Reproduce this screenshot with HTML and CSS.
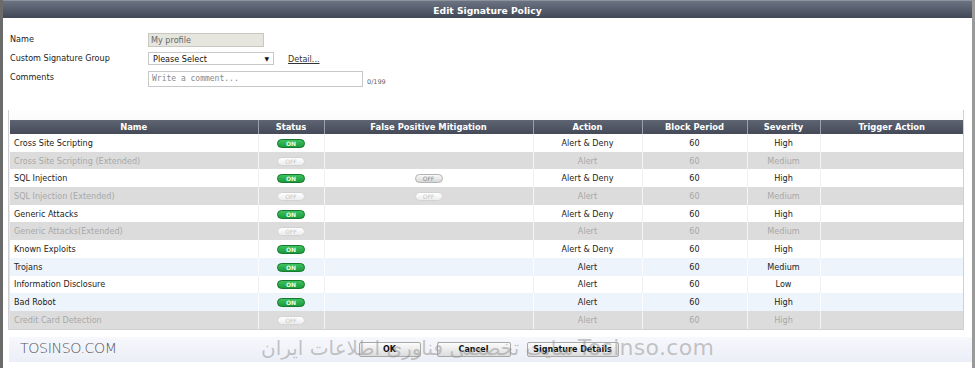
FILE: index.html
```html
<!DOCTYPE html>
<html lang="en">

<head>
    <meta charset="UTF-8">
    <title>Edit Signature Policy</title>
    <link rel="stylesheet" href="styles.css">
</head>

<body>
    <div class="dialog">
        <div class="title-bar">Edit Signature Policy</div>

        <div class="form">
            <div class="form-row">
                <label>Name</label>
                <input type="text" class="name-input" value="My profile" readonly>
            </div>
            <div class="form-row">
                <label>Custom Signature Group</label>
                <div class="select">Please Select <span class="arrow">&#9660;</span></div>
                <a href="#" class="detail-link">Detail...</a>
            </div>
            <div class="form-row">
                <label>Comments</label>
                <div class="comment-box">Write a comment...</div>
                <span class="counter">0/199</span>
            </div>
        </div>

        <div class="table-wrap">
            <table class="sig-table">
                <colgroup>
                    <col style="width: 248px">
                    <col style="width: 66px">
                    <col style="width: 209px">
                    <col style="width: 109px">
                    <col style="width: 105px">
                    <col style="width: 73px">
                    <col style="width: 143px">
                </colgroup>
                <thead>
                    <tr>
                        <th>Name</th>
                        <th>Status</th>
                        <th>False Positive Mitigation</th>
                        <th>Action</th>
                        <th>Block Period</th>
                        <th>Severity</th>
                        <th>Trigger Action</th>
                    </tr>
                </thead>
                <tbody>
                    <tr>
                        <td class="name">Cross Site Scripting</td>
                        <td><span class="toggle on">ON</span></td>
                        <td></td>
                        <td>Alert &amp; Deny</td>
                        <td>60</td>
                        <td>High</td>
                        <td></td>
                    </tr>
                    <tr class="disabled">
                        <td class="name">Cross Site Scripting (Extended)</td>
                        <td><span class="toggle off">OFF</span></td>
                        <td></td>
                        <td>Alert</td>
                        <td>60</td>
                        <td>Medium</td>
                        <td></td>
                    </tr>
                    <tr>
                        <td class="name">SQL Injection</td>
                        <td><span class="toggle on">ON</span></td>
                        <td><span class="toggle off">OFF</span></td>
                        <td>Alert &amp; Deny</td>
                        <td>60</td>
                        <td>High</td>
                        <td></td>
                    </tr>
                    <tr class="disabled">
                        <td class="name">SQL Injection (Extended)</td>
                        <td><span class="toggle off">OFF</span></td>
                        <td><span class="toggle off">OFF</span></td>
                        <td>Alert</td>
                        <td>60</td>
                        <td>Medium</td>
                        <td></td>
                    </tr>
                    <tr>
                        <td class="name">Generic Attacks</td>
                        <td><span class="toggle on">ON</span></td>
                        <td></td>
                        <td>Alert &amp; Deny</td>
                        <td>60</td>
                        <td>High</td>
                        <td></td>
                    </tr>
                    <tr class="disabled">
                        <td class="name">Generic Attacks(Extended)</td>
                        <td><span class="toggle off">OFF</span></td>
                        <td></td>
                        <td>Alert</td>
                        <td>60</td>
                        <td>Medium</td>
                        <td></td>
                    </tr>
                    <tr>
                        <td class="name">Known Exploits</td>
                        <td><span class="toggle on">ON</span></td>
                        <td></td>
                        <td>Alert &amp; Deny</td>
                        <td>60</td>
                        <td>High</td>
                        <td></td>
                    </tr>
                    <tr class="alt">
                        <td class="name">Trojans</td>
                        <td><span class="toggle on">ON</span></td>
                        <td></td>
                        <td>Alert</td>
                        <td>60</td>
                        <td>Medium</td>
                        <td></td>
                    </tr>
                    <tr>
                        <td class="name">Information Disclosure</td>
                        <td><span class="toggle on">ON</span></td>
                        <td></td>
                        <td>Alert</td>
                        <td>60</td>
                        <td>Low</td>
                        <td></td>
                    </tr>
                    <tr class="alt">
                        <td class="name">Bad Robot</td>
                        <td><span class="toggle on">ON</span></td>
                        <td></td>
                        <td>Alert</td>
                        <td>60</td>
                        <td>High</td>
                        <td></td>
                    </tr>
                    <tr class="disabled">
                        <td class="name">Credit Card Detection</td>
                        <td><span class="toggle off">OFF</span></td>
                        <td></td>
                        <td>Alert</td>
                        <td>60</td>
                        <td>High</td>
                        <td></td>
                    </tr>
                </tbody>
            </table>
        </div>

        <div class="footer">
            <button class="btn btn-ok">OK</button>
            <button class="btn btn-cancel">Cancel</button>
            <button class="btn btn-details">Signature Details</button>

            <span class="wm-left">TOSINSO.COM</span>
            <span class="wm-center"><span class="wm-fa" dir="rtl">سایت تخصصی فناوری اطلاعات ایران</span>Tosinso.com</span>
        </div>
    </div>
</body>

</html>
```

FILE: styles.css
```css
body {
    margin: 0;
    padding: 0;
    background-color: #fff;
    font-family: "DejaVu Sans", Verdana, sans-serif;
    font-size: 8.1px;
    color: #222;
}

.dialog {
    width: 969px;
    height: 368px;
    border-left: 3px solid #6b6b6b;
    border-right: 3px solid #9a9a9a;
    background-color: #fff;
}

.title-bar {
    height: 17px;
    line-height: 19px;
    background: linear-gradient(#6b7383, #414856);
    color: #fff;
    font-weight: bold;
    font-size: 9.2px;
    text-align: center;
    border-top: 1px solid #8d939c;
}

/* form */

.form {
    padding: 12px 0 0 7px;
    height: 80px;
}

.form-row {
    display: flex;
    align-items: center;
    height: 19px;
}

.form-row label {
    width: 138px;
    margin-top: -2px;
}

.name-input {
    width: 116px;
    height: 14px;
    box-sizing: border-box;
    margin: 0;
    padding: 0 2px;
    border: 1px solid #c8c8c0;
    background-color: #e6e6df;
    font-family: "DejaVu Sans", Verdana, sans-serif;
    font-size: 8.1px;
    color: #666;
}

.select {
    width: 126px;
    height: 13px;
    box-sizing: border-box;
    padding: 0 4px;
    border: 1px solid #c8c8c8;
    line-height: 12px;
    position: relative;
    color: #111;
}

.select .arrow {
    position: absolute;
    right: 4px;
    top: 0;
    font-size: 6px;
}

.detail-link {
    margin-left: 14px;
    color: #333;
    text-decoration: underline;
}

.comment-box {
    width: 215px;
    height: 16px;
    box-sizing: border-box;
    padding: 0 3px;
    border: 1px solid #c8c8c8;
    line-height: 14px;
    font-family: "DejaVu Sans Mono", "Liberation Mono", monospace;
    font-size: 8px;
    color: #888;
    margin-top: 2px;
}

.counter {
    margin-left: 4px;
    margin-top: 8px;
    font-size: 6.5px;
    color: #666;
}

/* table */

.table-wrap {
    margin: 0 8px 0 5px;
    padding: 10px 1px 0 1px;
    background: linear-gradient(#fdfdfd, #e4e4e8 60%, #dfe0e8);
    border: 1px solid #cfcfd4;
    border-top: none;
}

.sig-table {
    width: 953px;
    border-collapse: collapse;
    table-layout: fixed;
    background-color: #fff;
}

.sig-table th {
    height: 14px;
    padding: 0;
    background: linear-gradient(#5e6472, #444a57);
    color: #fff;
    font-weight: bold;
    font-size: 8.4px;
    text-align: center;
    border-left: 1px solid #9aa0aa;
}

.sig-table th:first-child {
    border-left: none;
}

.sig-table td {
    height: 17.7px;
    padding: 0;
    text-align: center;
    border-left: 1px solid #f0f0f0;
    color: #222;
}

.sig-table td:first-child {
    border-left: none;
}

.sig-table td.name {
    text-align: left;
    padding-left: 4px;
}

.sig-table tr.alt td {
    background-color: #eef4fc;
    border-left-color: #fafcff;
}

.sig-table tr.disabled td {
    background-color: #dcdcdc;
    color: #a8a8a8;
    border-left-color: #f4f4f4;
}

.toggle {
    display: inline-block;
    width: 28px;
    height: 9px;
    line-height: 8px;
    border-radius: 5px;
    font-size: 6px;
    font-weight: bold;
    vertical-align: middle;
    box-sizing: border-box;
}

.toggle.on {
    background: linear-gradient(#3ec25e, #1c9a3c);
    border: 1px solid #167a30;
    color: #e8ffe8;
}

.toggle.off {
    background: linear-gradient(#fafafa, #d6d6d6);
    border: 1px solid #b4b4b4;
    color: #888;
    font-weight: normal;
}

.disabled .toggle.off {
    background: linear-gradient(#ffffff, #ececec);
    border-color: #d2d2d2;
    color: #c4c4c4;
}

/* footer */

.footer {
    position: relative;
    margin: 7px 0 0 6px;
    height: 25px;
    background: linear-gradient(#f7f8fc, #eceef7);
    display: flex;
    align-items: center;
    justify-content: center;
    gap: 16px;
    padding-right: 4px;
}

.btn {
    height: 15px;
    padding: 0 10px;
    border: 1px solid #a8a8a8;
    border-radius: 2px;
    background: linear-gradient(#fbfbfb, #dcdcdc);
    font-family: "DejaVu Sans", Verdana, sans-serif;
    font-size: 8px;
    font-weight: bold;
    color: #111;
}

.btn-ok {
    width: 62px;
}

.btn-cancel {
    width: 74px;
}

.btn-details {
    width: 92px;
    padding: 0 4px;
}

.wm-left {
    position: absolute;
    left: 11px;
    top: 3px;
    font-family: "DejaVu Sans", sans-serif;
    font-weight: 200;
    font-size: 14.2px;
    color: #555;
    letter-spacing: -0.4px;
}

.wm-center {
    position: absolute;
    left: 252px;
    top: -2px;
    white-space: nowrap;
    font-family: "DejaVu Sans", sans-serif;
    font-size: 22px;
    letter-spacing: 0.3px;
    color: rgba(150, 150, 150, 0.55);
}

.wm-fa {
    font-size: 20px;
    letter-spacing: 0;
    margin-right: 4px;
}
```
